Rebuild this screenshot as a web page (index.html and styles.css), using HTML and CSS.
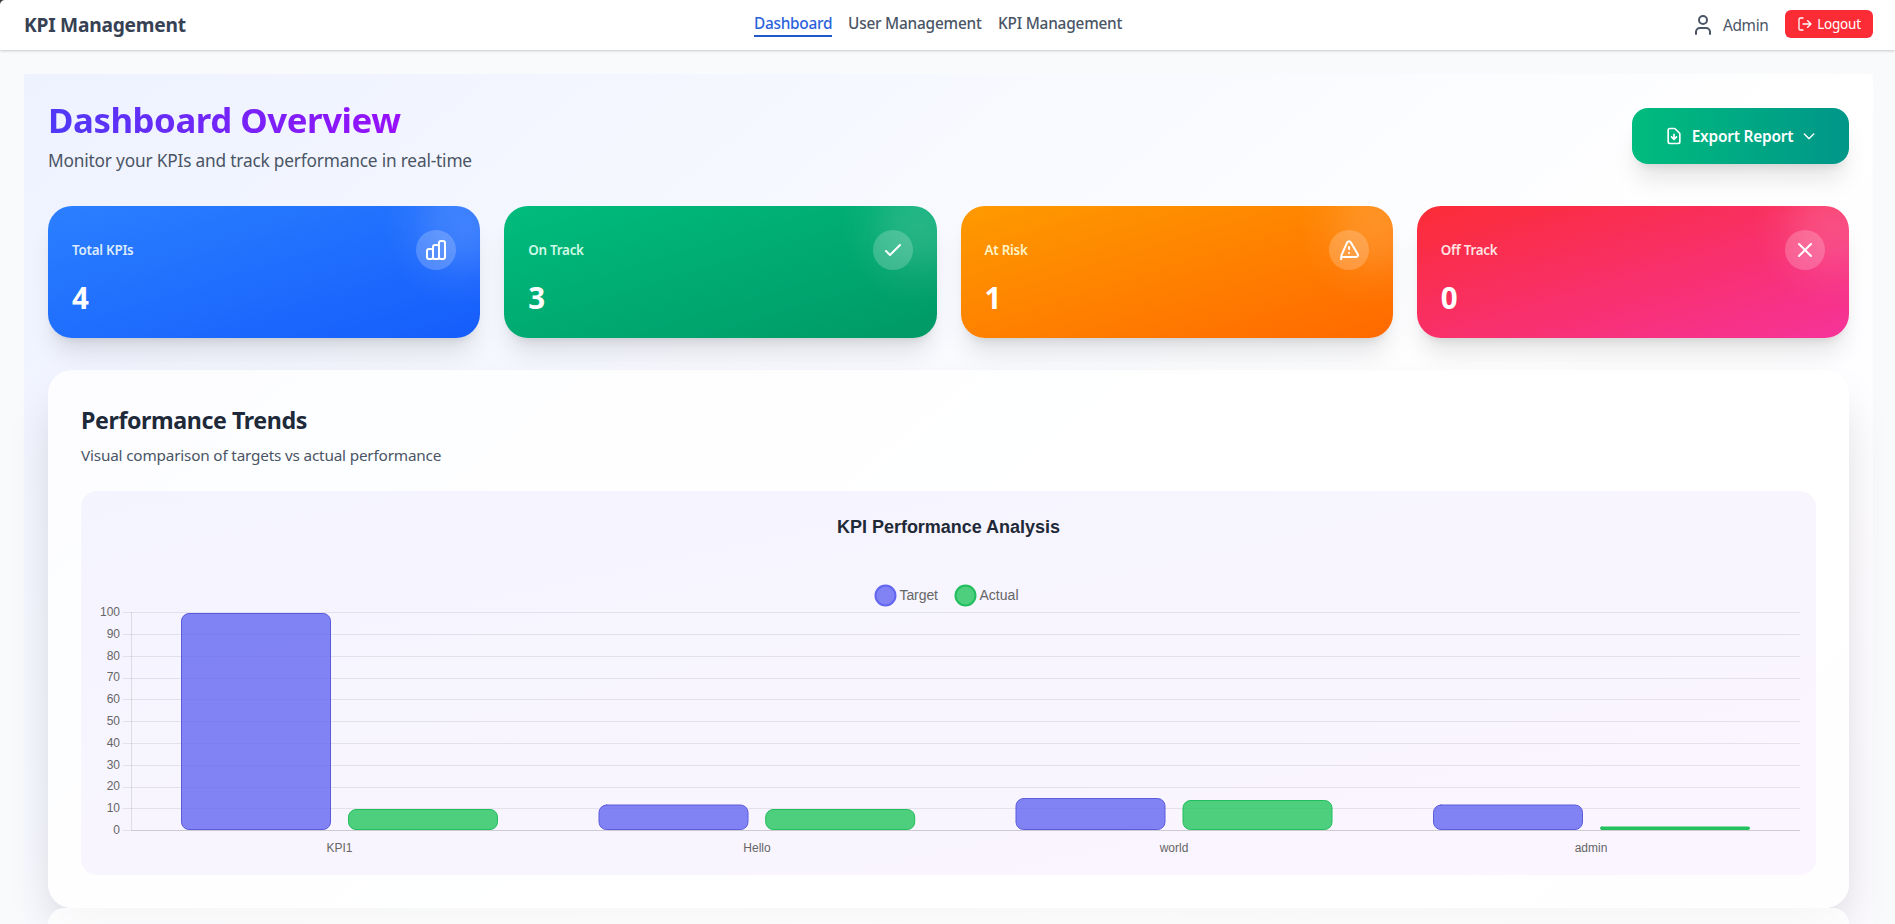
FILE: index.html
```html
<!DOCTYPE html>
<html lang="en">
<head>
<meta charset="utf-8">
<title>KPI Management</title>
<link rel="stylesheet" href="styles.css">
</head>
<body>
<header class="topbar">
  <div class="brand"><span class="t">KPI Management</span></div>
  <nav class="nav">
    <a class="active n1">Dashboard</a>
    <a class="n2">User Management</a>
    <a class="n3">KPI Management</a>
  </nav>
  <div class="account">
    <svg class="user" viewBox="0 0 24 24"><path d="M19 21v-2a4 4 0 0 0-4-4H9a4 4 0 0 0-4 4v2"/><circle cx="12" cy="7" r="4"/></svg>
    <span class="username">Admin</span>
    <button class="logout">
      <svg viewBox="0 0 24 24"><path d="M9 21H5a2 2 0 0 1-2-2V5a2 2 0 0 1 2-2h4M16 17l5-5-5-5M21 12H9"/></svg>
      <span>Logout</span>
    </button>
  </div>
</header>
<main class="main">
  <div class="dashboard">
    <div class="heading">
      <div>
        <h1>Dashboard Overview</h1>
        <p class="sub">Monitor your KPIs and track performance in real-time</p>
      </div>
      <button class="export">
        <svg class="file" viewBox="0 0 24 24"><path d="M12 10v6m0 0l-3-3m3 3l3-3m2 8H7a2 2 0 01-2-2V5a2 2 0 012-2h5.586a1 1 0 01.707.293l5.414 5.414a1 1 0 01.293.707V19a2 2 0 01-2 2z"/></svg>
        <span>Export Report</span>
        <svg class="chev" viewBox="0 0 24 24"><path d="M19 9l-7 7-7-7"/></svg>
      </button>
    </div>
    <section class="cards">
      <article class="card blue">
        <div class="card-top"><span class="label">Total KPIs</span><span class="badge"><svg viewBox="0 0 24 24"><path d="M9 19v-6a2 2 0 00-2-2H5a2 2 0 00-2 2v6a2 2 0 002 2h2a2 2 0 002-2zm0 0V9a2 2 0 012-2h2a2 2 0 012 2v10m-6 0a2 2 0 002 2h2a2 2 0 002-2m0 0V5a2 2 0 012-2h2a2 2 0 012 2v14a2 2 0 01-2 2h-2a2 2 0 01-2-2z"/></svg></span></div>
        <div class="value">4</div>
      </article>
      <article class="card green">
        <div class="card-top"><span class="label">On Track</span><span class="badge"><svg viewBox="0 0 24 24"><path d="M5 13l4 4L19 7"/></svg></span></div>
        <div class="value">3</div>
      </article>
      <article class="card orange">
        <div class="card-top"><span class="label">At Risk</span><span class="badge"><svg viewBox="0 0 24 24"><path d="M12 9v2m0 4h.01M4.500 19h14.700a1.900 1.900 0 001.600-2.800L13.700 4.200a1.900 1.900 0 00-3.400 0L4.500 17.200c-.4 1.200-.3 2.600-.3 4.100"/></svg></span></div>
        <div class="value">1</div>
      </article>
      <article class="card red">
        <div class="card-top"><span class="label">Off Track</span><span class="badge"><svg viewBox="0 0 24 24"><path d="M6 18L18 6M6 6l12 12"/></svg></span></div>
        <div class="value">0</div>
      </article>
    </section>
    <section class="panel">
      <h2>Performance Trends</h2>
      <p class="desc">Visual comparison of targets vs actual performance</p>
      <div class="chart-box">
        <svg class="chart" width="1735" height="384" viewBox="81 491 1735 384">
          <text class="chart-title" x="948.500" y="533" textLength="223">KPI Performance Analysis</text>
          <circle class="target" cx="885.5" cy="595.5" r="10"/>
          <text class="legend" x="899.5" y="599.500" textLength="38.5">Target</text>
          <circle class="actual" cx="965.5" cy="595.5" r="10"/>
          <text class="legend" x="979.5" y="599.500" textLength="39">Actual</text>
          <path class="grid" d="M123 612.5H1800M123 634.5H1800M123 656.5H1800M123 678.5H1800M123 699.5H1800M123 721.5H1800M123 743.5H1800M123 765.5H1800M123 787.5H1800M123 808.5H1800M123 830.5H1800"/>
          <path class="axis" d="M131.500 612V830"/>
          <path class="axis" d="M131 830.5H1800"/>
          <g class="tick">
            <text x="120" y="616">100</text><text x="120" y="638">90</text><text x="120" y="660">80</text><text x="120" y="681">70</text><text x="120" y="703">60</text><text x="120" y="725">50</text><text x="120" y="747">40</text><text x="120" y="769">30</text><text x="120" y="790">20</text><text x="120" y="812">10</text><text x="120" y="834">0</text>
          </g>
          <g class="target">
            <rect x="181.500" y="613.500" width="149" height="216" rx="7.500"/>
            <rect x="599" y="805" width="149" height="24.500" rx="7.500"/>
            <rect x="1016" y="798.500" width="149" height="31" rx="7.500"/>
            <rect x="1433.500" y="805" width="149" height="24.500" rx="7.500"/>
          </g>
          <g class="actual">
            <rect x="348.500" y="809.500" width="149" height="20" rx="7.500"/>
            <rect x="765.700" y="809.500" width="149" height="20" rx="7.500"/>
            <rect x="1183" y="800.500" width="149" height="29" rx="7.500"/>
            <rect class="solid" x="1600.500" y="827" width="149" height="2.500" rx="1.250"/>
          </g>
          <g class="cat">
            <text x="339.500" y="852">KPI1</text><text x="757" y="852">Hello</text><text x="1174" y="852">world</text><text x="1591" y="852">admin</text>
          </g>
        </svg>
      </div>
    </section>
    <section class="panel next"></section>
  </div>
</main>
<div class="corner"></div>
</body>
</html>
```
FILE: styles.css
```css
* { box-sizing: border-box; }
html, body { margin: 0; height: 924px; overflow: hidden; }
body { background: #f9fafb; font-family: "Noto Sans", sans-serif; color: #4a5565; }
h1, h2, p { margin: 0; }
button { border: 0; font: inherit; color: #fff; }
svg { fill: none; stroke: currentColor; stroke-width: 2; stroke-linecap: round; stroke-linejoin: round; flex: none; }
span, a, h1, h2, p { white-space: nowrap; }

.topbar { position: relative; z-index: 2; height: 50px; padding: 0 22px 0 24px; background: #fff; box-shadow: 0 1px 3px rgba(0,0,0,.1), 0 1px 2px rgba(0,0,0,.1); display: flex; justify-content: space-between; align-items: center; }
.brand { width: 162px; font-size: 19.2px; line-height: 28px; font-weight: 700; color: #364153; letter-spacing: -.25px; }
.nav { display: flex; gap: 16px; font-size: 15.4px; font-weight: 500; line-height: 26px; margin-top: -2px; }
.nav a { display: block; height: 26px; letter-spacing: -.22px; }
.nav .active { color: #2b62dc; border-bottom: 2px solid #2159c9; letter-spacing: -.28px; }
.n1 { width: 78px; }
.n2 { width: 134px; }
.n3 { width: 125px; }
.account { display: flex; align-items: center; }
.user { width: 24px; height: 24px; margin-right: 8px; }
.username { font-size: 15.4px; width: 46px; letter-spacing: -.35px; margin-right: 16px; }
.logout { display: flex; align-items: center; justify-content: center; gap: 4px; width: 88px; height: 28px; margin-top: -2px; padding: 0; border-radius: 6px; background: #fb2c36; font-size: 13.5px; letter-spacing: -.2px; }
.logout svg { width: 16px; height: 16px; }

.main { padding: 24px 22px 0 24px; }
.dashboard { height: 850px; padding: 24px 24px 0; background: linear-gradient(to bottom right, #eef2ff, #fff 50%, #faf5ff) 0 0 / 100% 1500px no-repeat; }
.heading { display: flex; justify-content: space-between; align-items: center; height: 76px; margin-bottom: 32px; }
h1 { width: 354px; font-size: 34.8px; line-height: 44px; font-weight: 700; letter-spacing: -.46px; margin-bottom: 4px; background: linear-gradient(to right, #4f39f6, #9810fa); background-clip: text; -webkit-background-clip: text; color: transparent; }
.sub { font-size: 17.3px; line-height: 28px; padding-top: 1px; margin-bottom: -1px; letter-spacing: -.19px; }
.export { display: flex; align-items: center; justify-content: center; width: 217px; height: 56px; padding: 0; border-radius: 16px; background: linear-gradient(to right, #00bc7d, #009689); box-shadow: 0 20px 25px -5px rgba(0,0,0,.1), 0 8px 10px -6px rgba(0,0,0,.1); font-size: 15.4px; font-weight: 600; letter-spacing: -.2px; }
.export .file { width: 20px; height: 20px; margin-right: 8px; }
.export .chev { width: 16px; height: 16px; margin-left: 8px; }

.cards { display: grid; grid-template-columns: repeat(4, 1fr); gap: 24px; margin-bottom: 32px; }
.card { --glow: radial-gradient(circle 80px at calc(100% - 16px) 20px, rgba(255,255,255,.15), rgba(255,255,255,.12) 30%, rgba(255,255,255,.04) 68%, rgba(255,255,255,0)); height: 132px; padding: 24px; border-radius: 24px; color: #fff; box-shadow: 0 20px 25px -5px rgba(0,0,0,.1), 0 8px 10px -6px rgba(0,0,0,.1); }
.blue { background: var(--glow), linear-gradient(to bottom right, #2b7fff, #155dfc); }
.green { background: var(--glow), linear-gradient(to bottom right, #00bc7d, #009966); }
.orange { background: var(--glow), linear-gradient(to bottom right, #fe9a00, #ff6900); }
.red { background: var(--glow), linear-gradient(to bottom right, #fb2c36, #f6339a); }
.card-top { display: flex; justify-content: space-between; align-items: center; height: 40px; margin-bottom: 8px; }
.label { font-size: 13.4px; line-height: 20px; font-weight: 600; letter-spacing: -.25px; }
.blue .label { color: #dbeafe; }
.green .label { color: #d0fae5; }
.orange .label { color: #fef3c6; }
.red .label { color: #ffe2e2; }
.badge { width: 40px; height: 40px; border-radius: 50%; background: rgba(255,255,255,.2); display: grid; place-items: center; }
.badge svg { width: 24px; height: 24px; }
.value { font-size: 29.5px; line-height: 39px; font-weight: 700; }

.panel { height: 538px; padding: 33px; border-radius: 24px; background: rgba(255,255,255,.8); box-shadow: 0 25px 50px -12px rgba(0,0,0,.2); }
.next { height: 16px; padding: 0; border-radius: 24px 24px 0 0; box-shadow: none; }
h2 { font-size: 23.2px; line-height: 34px; font-weight: 700; color: #1e2939; letter-spacing: -.4px; margin-bottom: 6px; }
.desc { font-size: 15.3px; line-height: 24px; letter-spacing: -.18px; margin-bottom: 24px; }
.chart-box { height: 384px; border-radius: 16px; background: linear-gradient(to bottom right, #f4f4ff, #f8f5fe 50%, #fbf5ff); overflow: hidden; }
.chart { display: block; }
.chart text { stroke: none; fill: #666; font-family: "Liberation Sans", Arial, sans-serif; font-size: 12px; }
.chart .chart-title { font-size: 18px; font-weight: 700; fill: #1f2937; text-anchor: middle; }
.chart .legend { font-size: 14px; }
.target { fill: rgba(99,102,241,.8); stroke: rgb(92,91,218); stroke-width: 1; }
.actual { fill: rgba(34,197,94,.8); stroke: rgb(34,190,94); stroke-width: 1; }
circle.target, circle.actual { stroke-width: 2; }
circle.target { stroke: #6366f1; }
.solid { fill: #22c55e; }
.grid { stroke: rgba(0,0,0,.08); stroke-width: 1; stroke-linecap: butt; }
.axis { stroke: rgba(0,0,0,.1); stroke-width: 1; stroke-linecap: butt; }
.tick text { text-anchor: end; }
.cat text { text-anchor: middle; }
.corner { position: absolute; z-index: 3; top: 0; left: 0; width: 5px; height: 5px; background: radial-gradient(circle at 5px 5px, transparent 4.500px, #3a3a3a 5.500px); }
```
